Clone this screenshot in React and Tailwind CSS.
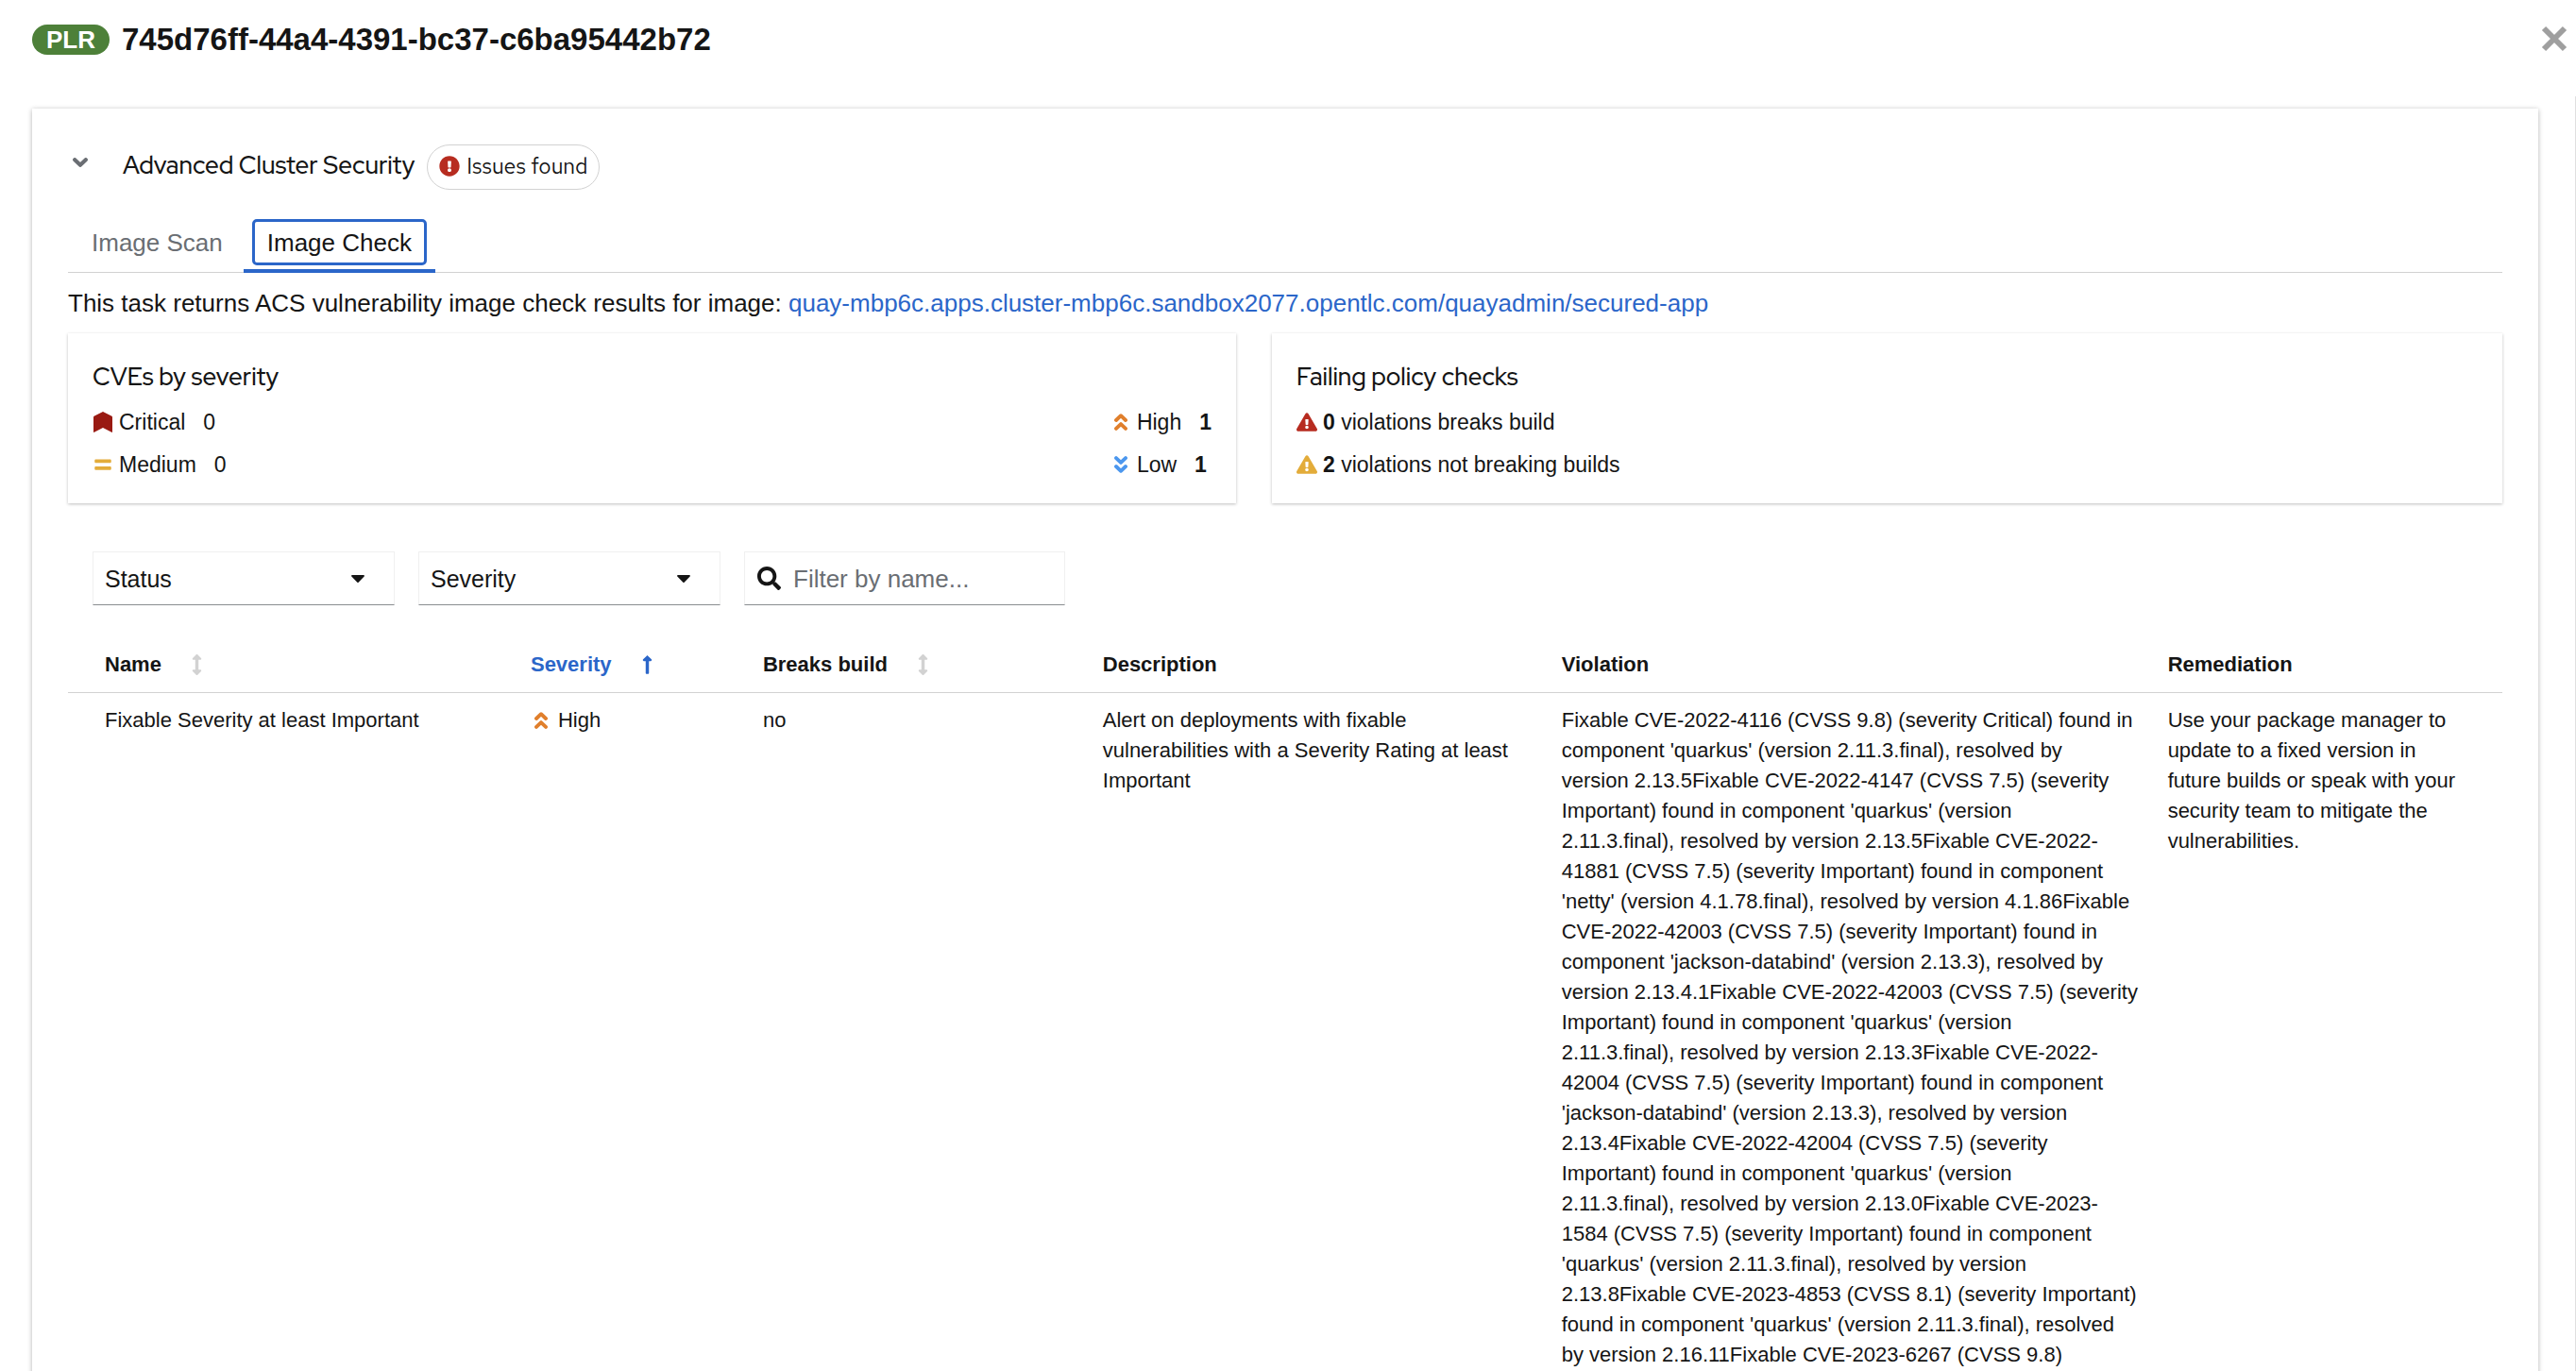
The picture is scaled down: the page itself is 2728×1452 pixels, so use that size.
import { FaExclamationCircle, FaExclamationTriangle, FaEquals, FaSearch, FaCaretDown, FaLongArrowAltUp, FaArrowsAltV } from "react-icons/fa";

const VIOLATION = `Fixable CVE-2022-4116 (CVSS 9.8) (severity Critical) found in
component 'quarkus' (version 2.11.3.final), resolved by
version 2.13.5Fixable CVE-2022-4147 (CVSS 7.5) (severity
Important) found in component 'quarkus' (version
2.11.3.final), resolved by version 2.13.5Fixable CVE-2022-
41881 (CVSS 7.5) (severity Important) found in component
'netty' (version 4.1.78.final), resolved by version 4.1.86Fixable
CVE-2022-42003 (CVSS 7.5) (severity Important) found in
component 'jackson-databind' (version 2.13.3), resolved by
version 2.13.4.1Fixable CVE-2022-42003 (CVSS 7.5) (severity
Important) found in component 'quarkus' (version
2.11.3.final), resolved by version 2.13.3Fixable CVE-2022-
42004 (CVSS 7.5) (severity Important) found in component
'jackson-databind' (version 2.13.3), resolved by version
2.13.4Fixable CVE-2022-42004 (CVSS 7.5) (severity
Important) found in component 'quarkus' (version
2.11.3.final), resolved by version 2.13.0Fixable CVE-2023-
1584 (CVSS 7.5) (severity Important) found in component
'quarkus' (version 2.11.3.final), resolved by version
2.13.8Fixable CVE-2023-4853 (CVSS 8.1) (severity Important)
found in component 'quarkus' (version 2.11.3.final), resolved
by version 2.16.11Fixable CVE-2023-6267 (CVSS 9.8)`;

const heading = "font-['Red_Hat_Display','Inter',sans-serif] text-[26px] leading-9 font-medium";

function CriticalIcon() {
  return (
    <svg viewBox="0 0 20 22" className="h-[22px] w-5" fill="#991a12" aria-hidden="true">
      <path d="M10 0 L19 4.6 Q20 5 20 6 V21.3 Q20 22.2 19.2 21.8 L10 17 L0.8 21.8 Q0 22.2 0 21.3 V6 Q0 5 1 4.6 Z" />
    </svg>
  );
}

function HighIcon() {
  return (
    <svg viewBox="0 0 14 18" className="h-[18px] w-3.5 text-[#e07f2c]" fill="none" stroke="currentColor" strokeWidth="3.9" strokeLinecap="round" strokeLinejoin="round" aria-hidden="true">
      <path d="M2 7 L7 2.2 L12 7 M2 15.9 L7 11.1 L12 15.9" />
    </svg>
  );
}

function LowIcon() {
  return (
    <svg viewBox="0 0 14 18" className="h-[18px] w-3.5 text-[#4c97ee]" fill="none" stroke="currentColor" strokeWidth="3.9" strokeLinecap="round" strokeLinejoin="round" aria-hidden="true">
      <path d="M2 2.1 L7 6.9 L12 2.1 M2 11 L7 15.8 L12 11" />
    </svg>
  );
}

function Select({ label }) {
  return (
    <div className="relative w-80">
      <select
        aria-label={label}
        className="h-[57px] w-full appearance-none border border-[#f0f0f0] border-b-[#8a8d90] bg-white px-3 text-[25px]"
      >
        <option>{label}</option>
      </select>
      <FaCaretDown className="pointer-events-none absolute top-4 right-[27px] size-6" />
    </div>
  );
}

function SortHeader({ label, active, className }) {
  return (
    <th scope="col" className={className} aria-sort={active ? "ascending" : "none"}>
      <button className={active ? "flex items-center gap-8 font-bold text-[#2b66c9]" : "flex items-center gap-8 font-bold"}>
        {label}
        {active ? (
          <FaLongArrowAltUp className="h-[22px] w-[11px]" />
        ) : (
          <FaArrowsAltV className="h-[22px] w-[11px] text-[#d2d2d2]" />
        )}
      </button>
    </th>
  );
}

export default function App() {
  return (
    <div className="h-screen overflow-hidden bg-white font-['Liberation_Sans',Arial,sans-serif] text-[22px] leading-8 text-[#151515]">
      <header className="flex h-[102px] items-start justify-between pt-6 pr-[9px] pl-[34px]">
        <div className="flex h-9 items-center gap-[13px]">
          <span className="flex h-8 items-center rounded-full bg-[#4d8039] px-[15px] text-[26px] font-bold text-white">PLR</span>
          <h1 className="text-[33px] leading-9 font-bold">745d76ff-44a4-4391-bc37-c6ba95442b72</h1>
        </div>
        <button aria-label="Close" className="text-[#9f9f9f]">
          <svg viewBox="0 0 28 28" className="mt-[3px] size-7" aria-hidden="true">
            <path d="M3 3 L25 25 M25 3 L3 25" stroke="currentColor" strokeWidth="6" />
          </svg>
        </button>
      </header>
      <div className="h-full border-r border-[#e0e0e0] pt-[13px] pr-[39px] pl-[34px]">
        <main className="h-full px-[38px] shadow-[0_1px_5px_rgba(0,0,0,0.3)]">
          <div className="flex items-center pt-[38px]">
            <button aria-label="Collapse" className="w-[58px] self-start pt-3.5 pl-[5px] text-[#6a6e73]">
              <svg viewBox="0 0 16 10" className="h-2.5 w-4" fill="none" stroke="currentColor" strokeWidth="4.2" strokeLinecap="round" strokeLinejoin="round" aria-hidden="true">
                <path d="M2.2 2.2 L8 7.8 L13.8 2.2" />
              </svg>
            </button>
            <h2 className={heading + " pb-1"}>Advanced Cluster Security</h2>
            <span className="ml-[13px] flex h-12 items-center gap-[7px] rounded-full border border-[#d2d2d2] px-3 pb-0.5 font-['Red_Hat_Text','Inter',sans-serif] text-[23px]">
              <FaExclamationCircle className="size-[22px] text-[#b72c20]" />
              Issues found
            </span>
          </div>
          <div role="tablist" className="mt-6 flex items-start border-b border-[#d2d2d2] text-[26px]">
            <button role="tab" aria-selected="false" className="pt-2 pr-[22px] pl-[25px] leading-[49px] text-[#6a6e73]">
              Image Scan
            </button>
            <button role="tab" aria-selected="true" className="-mb-px border-b-4 border-[#2b66c9] px-[9px] pt-[7px] pb-1">
              <span className="block rounded-[5px] border-[3px] border-[#2b66c9] px-[13px] pt-0.5 leading-[41px]">Image Check</span>
            </button>
          </div>
          <p className="pt-3.5 text-[26px] leading-9">
            This task returns ACS vulnerability image check results for image:{" "}
            <a href="#image" className="text-[#2b66c9]">
              quay-mbp6c.apps.cluster-mbp6c.sandbox2077.opentlc.com/quayadmin/secured-app
            </a>
          </p>
          <div className="mt-3.5 grid grid-cols-[1237fr_1303fr] gap-[38px] text-[23px]">
            <section className="h-[180px] px-[26px] pt-7 shadow-[0_1px_3px_rgba(0,0,0,0.25)]">
              <h3 className={heading}>CVEs by severity</h3>
              <div className="mt-3.5 flex justify-between">
                <ul className="flex flex-col gap-[13px] pl-px">
                  <li className="flex items-center gap-[7px]"><CriticalIcon />Critical<span className="ml-3">0</span></li>
                  <li className="flex items-center gap-[7px]"><FaEquals className="size-5 text-[#e3ac3a]" />Medium<span className="ml-3">0</span></li>
                </ul>
                <ul className="flex flex-col gap-[13px]">
                  <li className="flex items-center gap-[10px]"><HighIcon />High<b className="ml-[9px]">1</b></li>
                  <li className="flex items-center gap-[10px]"><LowIcon />Low<b className="ml-[9px]">1</b></li>
                </ul>
              </div>
            </section>
            <section className="h-[180px] px-[26px] pt-7 shadow-[0_1px_3px_rgba(0,0,0,0.25)]">
              <h3 className={heading}>Failing policy checks</h3>
              <ul className="mt-3.5 flex flex-col gap-[13px]">
                <li className="flex items-center gap-1.5"><FaExclamationTriangle className="size-[22px] text-[#b72c20]" /><span><b>0</b> violations breaks build</span></li>
                <li className="flex items-center gap-1.5"><FaExclamationTriangle className="size-[22px] text-[#e3ac3a]" /><span><b>2</b> violations not breaking builds</span></li>
              </ul>
            </section>
          </div>
          <div className="mt-[51px] flex gap-[25px] px-[26px]">
            <Select label="Status" />
            <Select label="Severity" />
            <label className="flex h-[57px] w-[340px] items-center gap-[13px] border border-[#f0f0f0] border-b-[#8a8d90] px-[13px]">
              <FaSearch className="size-[25px] shrink-0" />
              <input aria-label="Filter by name" placeholder="Filter by name..." className="w-full min-w-0 text-[26px] outline-none placeholder:text-[#6a6e73]" />
            </label>
          </div>
          <table className="mt-10 w-full table-fixed border-collapse text-left">
            <colgroup>
              <col className="w-[18.54%]" />
              <col className="w-[9.54%]" />
              <col className="w-[13.96%]" />
              <col className="w-[18.85%]" />
              <col className="w-[24.9%]" />
              <col />
            </colgroup>
            <thead>
              <tr className="border-b border-[#d2d2d2] [&>th]:px-3 [&>th]:pt-[7px] [&>th]:pb-[13px]">
                <SortHeader label="Name" className="pl-[39px]!" />
                <SortHeader label="Severity" active />
                <SortHeader label="Breaks build" />
                <th scope="col">Description</th>
                <th scope="col">Violation</th>
                <th scope="col">Remediation</th>
              </tr>
            </thead>
            <tbody>
              <tr className="align-top [&>td]:px-3 [&>td]:pt-[13px]">
                <td className="pl-[39px]!">Fixable Severity at least Important</td>
                <td><span className="flex items-center gap-[11px] pl-1"><HighIcon />High</span></td>
                <td>no</td>
                <td className="pr-6!">Alert on deployments with fixable vulnerabilities with a Severity Rating at least Important</td>
                <td className="pr-0! whitespace-pre-line">{VIOLATION}</td>
                <td className="pr-9!">Use your package manager to update to a fixed version in future builds or speak with your security team to mitigate the vulnerabilities.</td>
              </tr>
            </tbody>
          </table>
        </main>
      </div>
    </div>
  );
}
